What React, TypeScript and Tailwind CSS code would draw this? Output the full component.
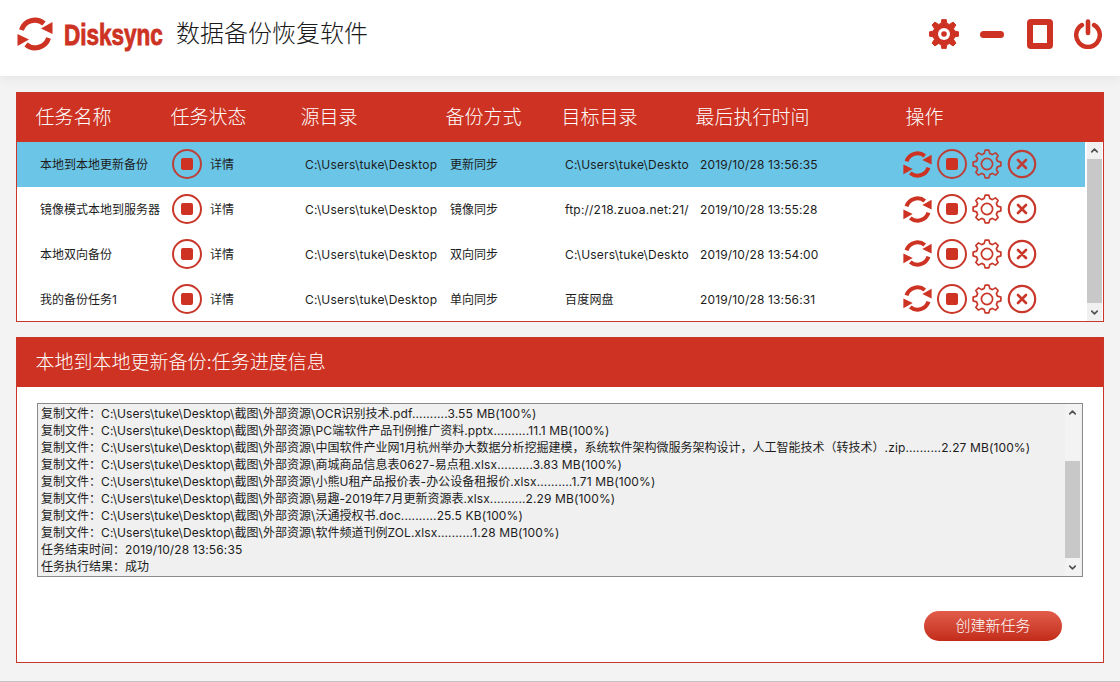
import { ChevronUp, ChevronDown } from 'lucide-react';

const tasks = [
  { name: '本地到本地更新备份', mode: '更新同步', target: 'C:\\Users\\tuke\\Deskto', time: '2019/10/28 13:56:35' },
  { name: '镜像模式本地到服务器', mode: '镜像同步', target: 'ftp://218.zuoa.net:21/', time: '2019/10/28 13:55:28' },
  { name: '本地双向备份', mode: '双向同步', target: 'C:\\Users\\tuke\\Deskto', time: '2019/10/28 13:54:00' },
  { name: '我的备份任务1', mode: '单向同步', target: '百度网盘', time: '2019/10/28 13:56:31' },
];

const logPrefix = '复制文件：C:\\Users\\tuke\\Desktop\\截图\\外部资源\\';
const logs = [
  logPrefix + 'OCR识别技术.pdf..........3.55 MB(100%)',
  logPrefix + 'PC端软件产品刊例推广资料.pptx..........11.1 MB(100%)',
  logPrefix + '中国软件产业网1月杭州举办大数据分析挖掘建模，系统软件架构微服务架构设计，人工智能技术（转技术）.zip..........2.27 MB(100%)',
  logPrefix + '商城商品信息表0627-易点租.xlsx..........3.83 MB(100%)',
  logPrefix + '小熊U租产品报价表-办公设备租报价.xlsx..........1.71 MB(100%)',
  logPrefix + '易趣-2019年7月更新资源表.xlsx..........2.29 MB(100%)',
  logPrefix + '沃通授权书.doc..........25.5 KB(100%)',
  logPrefix + '软件频道刊例ZOL.xlsx..........1.28 MB(100%)',
  '任务结束时间：2019/10/28 13:56:35',
  '任务执行结果：成功',
];

const columns = ['任务名称', '任务状态', '源目录', '备份方式', '目标目录', '最后执行时间', '操作'];

const gearPath = (c: number, outer: number, inner: number, teeth: number) => {
  const step = (Math.PI * 2) / teeth;
  const pts: string[] = [];
  for (let i = 0; i < teeth; i++) {
    const a = i * step - Math.PI / 2;
    const p = (r: number, t: number) => `${(c + r * Math.cos(t)).toFixed(2)} ${(c + r * Math.sin(t)).toFixed(2)}`;
    pts.push(p(inner, a - step * 0.34), p(outer, a - step * 0.17), p(outer, a + step * 0.17), p(inner, a + step * 0.34));
  }
  return 'M' + pts.join('L') + 'Z';
};

const SyncIcon = ({ className }: { className: string }) => (
  <svg viewBox="0 0 36 36" className={className}>
    <path d="M4.4 14A14.2 14.2 0 0 1 27 7.5" fill="none" stroke="#cd3222" strokeWidth="5" />
    <path d="M35.5 6V18L24 12.5Z" fill="#cd3222" />
    <path d="M31.6 22A14.2 14.2 0 0 1 9 28.5" fill="none" stroke="#cd3222" strokeWidth="5" />
    <path d="M.5 30V18L12 23.5Z" fill="#cd3222" />
  </svg>
);

const StopIcon = ({ muted }: { muted: boolean }) => (
  <div className={`w-[30px] h-[30px] shrink-0 rounded-full border-[2.5px] flex items-center justify-center ${muted ? 'border-[#bd4038]' : 'border-[#c9372a]'}`}>
    <div className="w-3 h-3 rounded-[2px] bg-[#cd3222]" />
  </div>
);

const GearOutline = ({ muted }: { muted: boolean }) => (
  <svg viewBox="0 0 30 30" className="w-[30px] h-[30px] shrink-0" fill="none" stroke={muted ? '#bd4038' : '#c9372a'} strokeWidth="1.7" strokeLinejoin="round">
    <path d={gearPath(15, 14, 10.8, 8)} />
    <circle cx="15" cy="15" r="5.6" />
  </svg>
);

const CloseIcon = ({ muted }: { muted: boolean }) => (
  <svg viewBox="0 0 30 30" className="w-[30px] h-[30px] shrink-0" fill="none" stroke={muted ? '#bd4038' : '#c9372a'}>
    <circle cx="15" cy="15" r="13.2" strokeWidth="2.2" />
    <path d="M11 11L19 19M19 11L11 19" strokeWidth="2.6" strokeLinecap="round" />
  </svg>
);

const TopGear = () => (
  <svg viewBox="0 0 30 30" className="w-[30px] h-[30px]">
    <path d={gearPath(15, 15, 11, 8)} fill="#cd3222" stroke="#cd3222" strokeWidth="1" strokeLinejoin="round" />
    <circle cx="15" cy="15" r="6" fill="#fff" />
    <circle cx="15" cy="15" r="2.8" fill="#cd3222" />
  </svg>
);

const PowerIcon = () => (
  <svg viewBox="0 0 28 30" className="w-7 h-[30px]" fill="none" stroke="#cd3222" strokeLinecap="round">
    <path d="M8 6A11.8 11.8 0 1 0 20 6" strokeWidth="4.4" />
    <path d="M14 2.5V14" strokeWidth="4.6" />
  </svg>
);

const Scrollbar = ({ before, thumb, bg }: { before: string; thumb: string; bg: string }) => (
  <div className={`w-[15px] h-full flex flex-col shrink-0 ${bg}`}>
    <div className="h-[17px] flex items-center justify-center shrink-0">
      <ChevronUp size={11} strokeWidth={3.5} className="text-[#505050]" />
    </div>
    <div className={before} />
    <div className={`${thumb} bg-[#c8c8c8]`} />
    <div className="flex-1" />
    <div className="h-[17px] flex items-center justify-center shrink-0">
      <ChevronDown size={11} strokeWidth={3.5} className="text-[#505050]" />
    </div>
  </div>
);

// latin runs need a touch more spacing to reach the reference's line widths
const LogLine = ({ text }: { text: string }) => (
  <div>
    {text.split(/([\x00-\x7f]+)/).map((part, i) => (
      <span key={i} className={i % 2 === 1 ? 'tracking-[0.12px]' : ''}>{part}</span>
    ))}
  </div>
);

const App = () => {
  return (
    <div className="w-[1120px] h-[682px] overflow-hidden bg-[#f3f3f3] flex flex-col border-b border-[#c4c4c4] text-[12px] text-[#1c1c1c] font-['Inter','Noto_Sans_CJK_SC',sans-serif]">
      <header className="h-[76px] shrink-0 bg-white flex items-center shadow-[0_3px_10px_rgba(0,0,0,0.06)] pl-[17px] pr-[18px] pb-2">
        <SyncIcon className="w-9 h-9" />
        <div className="ml-[11px] w-[112px]">
          <span className="inline-block origin-left scale-x-[0.75] text-[#cd3222] text-[30px] font-bold font-['Liberation_Sans',sans-serif] [-webkit-text-stroke:0.9px_#cd3222]">Disksync</span>
        </div>
        <span className="text-[24px] text-[#1a1a1a] font-light">数据备份恢复软件</span>
        <div className="ml-auto flex items-center">
          <TopGear />
          <div className="ml-[21px] w-6 h-[7px] rounded-full bg-[#cd3222]" />
          <div className="ml-[23px] w-[26px] h-[30px] rounded-[4px] border-[6px] border-[#cd3222]" />
          <div className="ml-[21px]"><PowerIcon /></div>
        </div>
      </header>

      <main className="flex-1 flex flex-col gap-[15px] px-4 pt-4">
        <section className="h-[230px] flex flex-col border border-[#c9372a] bg-white">
          <div className="h-[49px] shrink-0 bg-[#cd3222] grid grid-cols-[135px_130px_145px_116px_134px_210px_1fr] items-center pl-[18.5px] pt-0.5 text-[19px] text-white font-light">
            {columns.map((c) => (
              <span key={c}>{c}</span>
            ))}
          </div>
          <div className="flex-1 min-h-0 flex">
            <div className="w-[1068px] flex flex-col">
              {tasks.map((t, i) => (
                <div key={t.name} className={`h-[45px] grid grid-cols-[135px_130px_145px_116px_134px_210px_1fr] items-center pl-[19px] ${i === 0 ? 'bg-[#6bc5e6]' : ''}`}>
                  <span className="pl-1 pt-0.5 whitespace-nowrap">{t.name}</span>
                  <div className="flex items-center gap-2 pl-px">
                    <StopIcon muted={i === 0} />
                    <span className="pt-0.5">详情</span>
                  </div>
                  <span className="pl-1 pt-0.5 whitespace-nowrap tracking-[0.24px]">C:\Users\tuke\Desktop</span>
                  <span className="pl-1 pt-0.5">{t.mode}</span>
                  <span className="pl-[3px] pt-0.5 whitespace-nowrap tracking-[0.2px]">{t.target}</span>
                  <span className="pl-1 pt-0.5 tracking-[0.14px]">{t.time}</span>
                  <div className="flex items-center gap-[5px] -ml-[3px]">
                    <SyncIcon className="w-[29px] h-[29px] shrink-0" />
                    <StopIcon muted={i === 0} />
                    <GearOutline muted={i === 0} />
                    <CloseIcon muted={i === 0} />
                  </div>
                </div>
              ))}
            </div>
            <div className="ml-0.5">
              <Scrollbar before="h-0" thumb="h-[144px]" bg="bg-[#f0f0f0]" />
            </div>
          </div>
        </section>

        <section className="h-[326px] flex flex-col border border-[#c9372a] bg-white">
          <div className="h-[49px] shrink-0 bg-[#cd3222] flex items-center pl-[18.5px] pt-0.5 text-[19px] text-white font-light">
            本地到本地更新备份:任务进度信息
          </div>
          <div className="mt-4 ml-5 mr-5 h-[174px] shrink-0 flex border border-[#8a8a8a] bg-[#f0f0f0] pr-0.5">
            <div className="flex-1 min-w-0 overflow-hidden pl-[3px] pt-px leading-[17px] whitespace-nowrap">
              {logs.map((l) => (
                <LogLine key={l} text={l} />
              ))}
            </div>
            <Scrollbar before="h-[40px]" thumb="h-[97px]" bg="bg-[#f3f3f3]" />
          </div>
          <button className="self-end mr-[41px] mt-[34px] w-[138px] h-[30px] rounded-full bg-gradient-to-b from-[#e25c4a] to-[#c22b18] text-white text-[15px] font-light">
            创建新任务
          </button>
        </section>
      </main>
    </div>
  );
};

export default App;
